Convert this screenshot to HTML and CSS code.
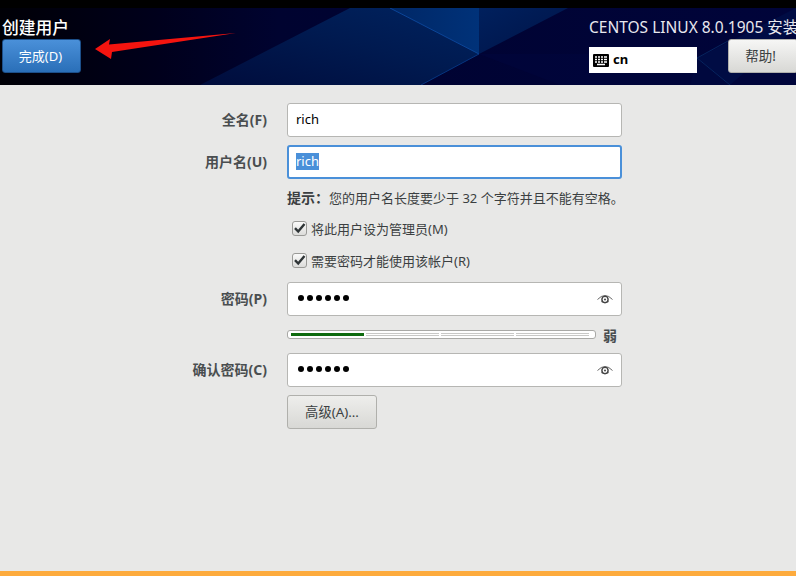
FILE: index.html
```html
<!DOCTYPE html>
<html lang="zh-CN">
<head>
<meta charset="utf-8">
<title>创建用户</title>
<link rel="stylesheet" href="styles.css">
</head>
<body>
<div class="screen">
  <header class="header">
    <svg class="header-art" width="796" height="77" viewBox="0 0 796 77" aria-hidden="true">
      <defs>
        <linearGradient id="bg" x1="0" x2="1" y1="0" y2="0">
          <stop offset="0" stop-color="#000006"/>
          <stop offset="0.2" stop-color="#00001c"/>
          <stop offset="0.35" stop-color="#000330"/>
          <stop offset="1" stop-color="#00043a"/>
        </linearGradient>
        <linearGradient id="band" x1="0" x2="1" y1="1" y2="0">
          <stop offset="0" stop-color="#000c3c"/>
          <stop offset="0.55" stop-color="#001a50"/>
          <stop offset="1" stop-color="#00235f"/>
        </linearGradient>
        <linearGradient id="peak" x1="0" x2="1" y1="0" y2="0">
          <stop offset="0" stop-color="#002766"/>
          <stop offset="1" stop-color="#003279"/>
        </linearGradient>
        <linearGradient id="wing" x1="0" x2="1" y1="0" y2="1">
          <stop offset="0" stop-color="#00205d"/>
          <stop offset="1" stop-color="#001347"/>
        </linearGradient>
      </defs>
      <rect width="796" height="77" fill="url(#bg)"/>
      <polygon points="200,77 350,0 390,0 479,46 421,77" fill="url(#band)"/>
      <polygon points="390,0 479,0 479,46" fill="url(#peak)"/>
      <polygon points="479,0 568,0 479,46" fill="url(#wing)"/>
      <polygon points="479,46 796,46 796,77 560,77" fill="#00053c" opacity="0.7"/>
      <polygon points="697,50 796,0 796,20 730,77" fill="#000c44"/>
      <polygon points="697,50 730,77 690,77" fill="#00083e"/>
      <line x1="390" y1="0" x2="479" y2="46" stroke="#0b4699" stroke-width="1"/>
      <line x1="479" y1="46" x2="421" y2="77" stroke="#06357f" stroke-width="1"/>
      <line x1="697" y1="50" x2="730" y2="77" stroke="#06245e" stroke-width="1"/>
      <line x1="697" y1="50" x2="728" y2="33" stroke="#06245e" stroke-width="1"/>
    </svg>
    <div class="header-left">
      <h1 class="title">创建用户</h1>
      <button class="btn btn-done" type="button">完成(D)</button>
    </div>
    <div class="header-right">
      <div class="product">CENTOS LINUX 8.0.1905 安装</div>
      <div class="header-controls">
        <div class="layout-box">
          <svg class="kbd-icon" width="16" height="13" viewBox="0 0 16 13" aria-hidden="true">
            <rect width="16" height="13" rx="1" fill="#000"/>
            <path d="M2 3h2M5 3h2M8 3h2M11 3h3M2 5.5h2M5 5.5h2M8 5.5h2M11 5.5h3M2 8h2M5 8h2M8 8h2M11 8h3M4 10.5h8" stroke="#fff" stroke-width="1.4"/>
          </svg>
          <span class="layout-text">cn</span>
        </div>
        <button class="btn btn-help" type="button">帮助!</button>
      </div>
    </div>
    <svg class="arrow" width="150" height="30" viewBox="0 0 150 30" aria-hidden="true">
      <polygon points="0,17 15,7 14,12.5 141,1 17,20 16,27" fill="#f5140f"/>
    </svg>
  </header>

  <main class="form">
    <div class="row row-first">
      <label class="label">全名(F)</label>
      <div class="entry"><span class="value">rich</span></div>
    </div>
    <div class="row">
      <label class="label">用户名(U)</label>
      <div class="entry entry-focus"><span class="value selected">rich</span></div>
    </div>
    <p class="hint"><b class="hint-bold">提示：</b>您的用户名长度要少于 32 个字符并且不能有空格。</p>
    <div class="check-row">
      <span class="checkbox"><svg width="13" height="12" viewBox="0 0 13 12" aria-hidden="true"><path d="M2 6.2l3.2 3.3L11.5 2" fill="none" stroke="#2e3436" stroke-width="2.4"/></svg></span>
      <span class="check-label">将此用户设为管理员(M)</span>
    </div>
    <div class="check-row check-row-second">
      <span class="checkbox"><svg width="13" height="12" viewBox="0 0 13 12" aria-hidden="true"><path d="M2 6.2l3.2 3.3L11.5 2" fill="none" stroke="#2e3436" stroke-width="2.4"/></svg></span>
      <span class="check-label">需要密码才能使用该帐户(R)</span>
    </div>
    <div class="row row-password">
      <label class="label">密码(P)</label>
      <div class="entry entry-pass">
        <span class="dots"><i></i><i></i><i></i><i></i><i></i><i></i></span>
        <svg class="eye" width="16" height="12" viewBox="0 0 16 12" aria-hidden="true"><path d="M0.5 6.5Q8 -1.5 15.5 6.5" fill="none" stroke="#666" stroke-width="1"/><path d="M4 8.5Q8 11.5 12 8.5" fill="none" stroke="#888" stroke-width="0.8"/><circle cx="8" cy="6.5" r="3.1" fill="none" stroke="#444" stroke-width="1.4"/><circle cx="8" cy="6.5" r="1.1" fill="#555"/></svg>
      </div>
    </div>
    <div class="strength-row">
      <div class="strength">
        <span class="seg seg-on"></span><span class="seg"></span><span class="seg"></span><span class="seg"></span>
      </div>
      <span class="strength-text">弱</span>
    </div>
    <div class="row row-confirm">
      <label class="label">确认密码(C)</label>
      <div class="entry entry-pass">
        <span class="dots"><i></i><i></i><i></i><i></i><i></i><i></i></span>
        <svg class="eye" width="16" height="12" viewBox="0 0 16 12" aria-hidden="true"><path d="M0.5 6.5Q8 -1.5 15.5 6.5" fill="none" stroke="#666" stroke-width="1"/><path d="M4 8.5Q8 11.5 12 8.5" fill="none" stroke="#888" stroke-width="0.8"/><circle cx="8" cy="6.5" r="3.1" fill="none" stroke="#444" stroke-width="1.4"/><circle cx="8" cy="6.5" r="1.1" fill="#555"/></svg>
      </div>
    </div>
    <button class="btn btn-advanced" type="button">高级(A)...</button>
  </main>

  <div class="warning-bar"></div>
</div>
</body>
</html>
```
FILE: styles.css
```css
* { box-sizing: border-box; }
html, body { margin: 0; height: 100%; }
body {
  background: #e8e8e7;
  font-family: "Noto Sans", "Noto Sans CJK SC", sans-serif;
  font-size: 13px;
  color: #2e3436;
  overflow: hidden;
}
.screen {
  width: 796px;
  height: 576px;
  display: flex;
  flex-direction: column;
  border-top: 8px solid #000;
}
.header {
  position: relative;
  height: 77px;
  flex: none;
  display: flex;
  justify-content: space-between;
  overflow: hidden;
  background: #00053a;
}
.header-art { position: absolute; left: 0; top: 0; }
.arrow { position: absolute; left: 95px; top: 24px; }
.header-left { position: relative; padding: 8px 0 0 2px; }
.title {
  margin: 0;
  font-size: 16.8px;
  font-weight: 500;
  line-height: 23px;
  color: #fff;
}
.btn {
  font: inherit;
  border-radius: 3px;
  padding: 0 0 2px;
  display: block;
}
.btn-done {
  width: 79px;
  height: 34px;
  padding-right: 2px;
  font-size: 13px;
  color: #fff;
  border: 1px solid #1c4f8a;
  background: linear-gradient(#4a90d9, #2a6fb8);
}
.header-right { position: relative; width: 207px; flex: none; padding-top: 8px; }
.product {
  font-size: 15.5px;
  line-height: 23px;
  color: #e8e8ee;
  white-space: nowrap;
}
.header-controls { display: flex; align-items: flex-start; margin-top: 8px; }
.layout-box {
  flex: none;
  width: 108px;
  height: 26px;
  background: #fff;
  display: flex;
  align-items: center;
  padding-left: 4px;
  gap: 4px;
}
.layout-text { font-size: 13px; font-weight: 700; color: #000; padding-bottom: 2px; }
.btn-help {
  flex: none;
  width: 70px;
  height: 34px;
  margin-left: 31px;
  margin-top: -8px;
  padding-right: 5px;
  font-size: 13.5px;
  color: #3a3f41;
  border: 1px solid #b0b0ac;
  background: linear-gradient(#f6f6f5, #d8d8d5);
}
.form {
  flex: 1;
  padding-top: 18px;
  display: flex;
  flex-direction: column;
  padding-left: 187px;
}
.row { display: flex; align-items: center; margin-top: 8px; }
.row-first { margin-top: 0; }
.row-password { margin-top: 13px; }
.row-confirm { margin-top: 14px; }
.label {
  width: 80px;
  margin-right: 20px;
  text-align: right;
  font-size: 14px;
  font-weight: 700;
  white-space: nowrap;
  color: #4a4e50;
  padding-bottom: 3px;
}
.entry {
  width: 335px;
  height: 34px;
  border: 1px solid #b6b6b3;
  border-radius: 3px;
  background: #fff;
  padding-left: 8px;
  display: flex;
  align-items: center;
  font-size: 13px;
  color: #000;
}
.value { position: relative; top: -1px; }
.entry-focus { border: 2px solid #4a90d9; padding-left: 7px; }
.selected { background: #4a90d9; color: #fff; line-height: 17px; }
.hint {
  margin: 10px 0 0 100px;
  font-size: 13px;
  line-height: 18px;
  color: #3b3f41;
  white-space: nowrap;
}
.hint-bold { font-weight: 700; font-size: 14px; }
.check-row {
  margin: 12px 0 0 105px;
  display: flex;
  align-items: center;
  gap: 4px;
  height: 18px;
}
.check-row-second { margin-top: 14px; }
.checkbox {
  width: 15px;
  height: 15px;
  border: 1px solid #9a9a97;
  border-radius: 3px;
  background: linear-gradient(#fafafa, #dcdcda);
  display: flex;
  align-items: center;
  justify-content: center;
}
.check-label { font-size: 13px; color: #3b3f41; white-space: nowrap; }
.entry-pass { justify-content: space-between; padding-right: 8px; padding-left: 10px; }
.dots { display: flex; gap: 3px; position: relative; top: -1px; }
.dots i { width: 6px; height: 6px; border-radius: 50%; background: #000; display: block; }
.strength-row {
  margin: 14px 0 0 100px;
  display: flex;
  align-items: center;
  height: 9px;
}
.strength {
  width: 309px;
  height: 9px;
  border: 1px solid #a9a9a6;
  border-radius: 3px;
  background: #fff;
  display: flex;
  gap: 2px;
  padding: 2px 6px 2px 3px;
}
.seg { flex: 1; background: #fff; border-top: 1px solid #c8c8c6; border-bottom: 1px solid #c8c8c6; }
.seg-on { background: #0f6b0f; border-color: #0f6b0f; }
.strength-text { margin-left: 7px; font-size: 14px; font-weight: 700; color: #4a4e50; }
.btn-advanced {
  width: 90px;
  height: 34px;
  margin: 8px 0 0 100px;
  font-size: 13.3px;
  color: #3b3f41;
  border: 1px solid #b0b0ac;
  background: linear-gradient(#eeeeec, #d8d8d5);
}
.warning-bar { height: 5px; flex: none; background: #fdab3d; }
```
